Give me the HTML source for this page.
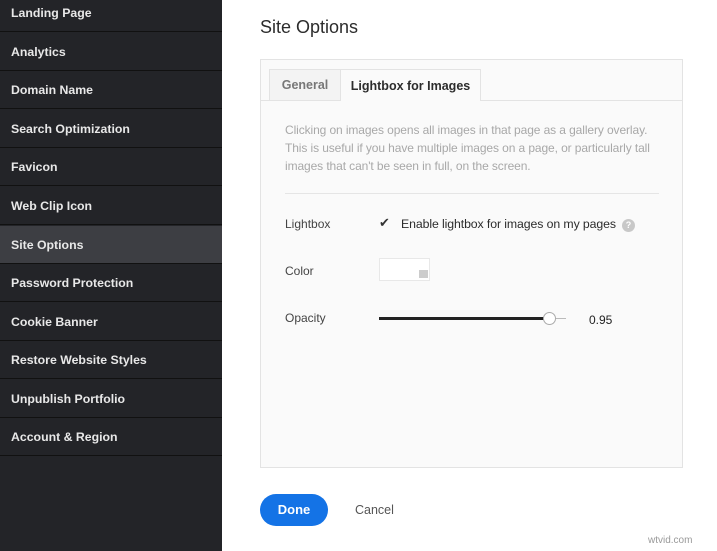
<!DOCTYPE html>
<html><head><style>
body{margin:0;width:717px;height:551px;background:#fff;font-family:"Liberation Sans",sans-serif;position:relative;overflow:hidden}
.sb{position:absolute;left:0;top:0;width:222px;height:551px;background:#232428}
.it{position:absolute;left:0;width:222px;height:38px;border-bottom:1px solid #111;color:#e8e8e8;font-size:12.3px;font-weight:bold;line-height:38px;padding-left:11px;box-sizing:border-box}
.act{background:#3d3e43}
.a{position:absolute}
</style></head><body>
<div class="sb">
<div class="it" style="top:-6px">Landing Page</div>
<div class="it" style="top:33px">Analytics</div>
<div class="it" style="top:71px">Domain Name</div>
<div class="it" style="top:110px">Search Optimization</div>
<div class="it" style="top:148px">Favicon</div>
<div class="it" style="top:187px">Web Clip Icon</div>
<div class="it act" style="top:226px">Site Options</div>
<div class="it" style="top:264px">Password Protection</div>
<div class="it" style="top:303px">Cookie Banner</div>
<div class="it" style="top:341px">Restore Website Styles</div>
<div class="it" style="top:380px">Unpublish Portfolio</div>
<div class="it" style="top:418px">Account &amp; Region</div>
</div>
<div class="a" style="left:260px;top:17px;font-size:18px;color:#2c2c2c">Site Options</div>
<div class="a" style="left:260px;top:59px;width:423px;height:409px;background:#fafafa;border:1px solid #e3e3e3;box-sizing:border-box"></div>
<div class="a" style="left:261px;top:100px;width:421px;height:1px;background:#e3e3e3"></div>
<div class="a" style="left:269px;top:69px;width:72px;height:31px;background:#f3f3f3;border:1px solid #e3e3e3;border-bottom:none;box-sizing:border-box;font-size:12.5px;color:#777;text-align:center;line-height:31px;font-weight:bold">General</div>
<div class="a" style="left:341px;top:69px;width:140px;height:32px;background:#fafafa;border:1px solid #e3e3e3;border-bottom:none;border-left:none;box-sizing:border-box;font-size:12.5px;color:#2c2c2c;text-align:center;line-height:32px;font-weight:bold">Lightbox for Images</div>
<div class="a" style="left:285px;top:121px;width:410px;font-size:12px;line-height:18px;color:#a8a8a8;letter-spacing:-0.1px">Clicking on images opens all images in that page as a gallery overlay.<br>This is useful if you have multiple images on a page, or particularly tall<br>images that can't be seen in full, on the screen.</div>
<div class="a" style="left:285px;top:193px;width:374px;height:1px;background:#e5e5e5"></div>
<div class="a" style="left:285px;top:217px;font-size:12px;color:#444">Lightbox</div>
<div class="a" style="left:379px;top:215px;font-size:13px;color:#333">✔</div>
<div class="a" style="left:401px;top:217px;font-size:12.3px;color:#2c2c2c;letter-spacing:-0.1px">Enable lightbox for images on my pages</div>
<div class="a" style="left:622px;top:219px;width:13px;height:13px;border-radius:50%;background:#c8c8c8;color:#fff;font-size:9px;text-align:center;line-height:13px;font-weight:bold">?</div>
<div class="a" style="left:285px;top:264px;font-size:12px;color:#444">Color</div>
<div class="a" style="left:379px;top:258px;width:51px;height:23px;background:#fff;border:1px solid #e8e8e8;box-sizing:border-box"></div>
<div class="a" style="left:419px;top:270px;width:9px;height:8px;background:#ccc"></div>
<div class="a" style="left:285px;top:311px;font-size:12px;color:#444">Opacity</div>
<div class="a" style="left:379px;top:317px;width:165px;height:3px;background:#222"></div>
<div class="a" style="left:556px;top:318px;width:10px;height:1px;background:#bbb"></div>
<div class="a" style="left:543px;top:312px;width:13px;height:13px;border-radius:50%;background:#fff;border:1px solid #aaa;box-sizing:border-box"></div>
<div class="a" style="left:589px;top:313px;font-size:12px;color:#222">0.95</div>
<div class="a" style="left:260px;top:494px;width:68px;height:32px;border-radius:16px;background:#1473e6;color:#fff;font-size:13px;font-weight:bold;text-align:center;line-height:32px">Done</div>
<div class="a" style="left:355px;top:503px;font-size:12.5px;color:#555">Cancel</div>
<div class="a" style="left:648px;top:535px;font-size:10px;color:#999">wtvid.com</div>
</body></html>
